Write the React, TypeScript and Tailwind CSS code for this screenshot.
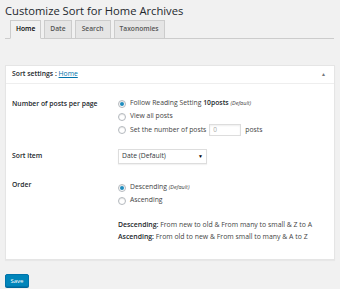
import React from "react";

function Radio({ checked }: { checked?: boolean }) {
  return (
    <span className="inline-flex items-center justify-center w-[8px] h-[8px] rounded-full border border-[#b4b9be] bg-white shadow-[inset_0_1px_1px_rgba(0,0,0,0.1)] shrink-0">
      {checked && <span className="w-[4px] h-[4px] rounded-full bg-[#1e8cbe]" />}
    </span>
  );
}

export default function App() {
  const font = { fontFamily: '"Open Sans", "Noto Sans", sans-serif' };
  return (
    <div className="w-[340px] h-[289px] bg-[#f1f1f1] text-[#444] overflow-hidden" style={font}>
      <div className="px-[5px]">
        <div className="pt-[2px] h-[20px] text-[11.2px] font-normal leading-[18px] text-[#23282d]">Customize Sort for Home Archives</div>
        <div className="flex items-end gap-[3px] pl-[5px] h-[19px] border-b border-[#ccc] mr-[1px]">
          <div className="h-[19px] -mb-px px-[5px] flex items-center border border-[#ccc] border-b-[#f1f1f1] bg-[#f1f1f1] text-[6.7px] font-semibold text-[#000]">Home</div>
          <div className="h-[18px] px-[5px] flex items-center border border-[#ccc] border-b-0 bg-[#e5e5e5] text-[6.7px] font-semibold text-[#555]">Date</div>
          <div className="h-[18px] px-[6px] flex items-center border border-[#ccc] border-b-0 bg-[#e5e5e5] text-[6.7px] font-semibold text-[#555]">Search</div>
          <div className="h-[18px] px-[5px] flex items-center border border-[#ccc] border-b-0 bg-[#e5e5e5] text-[6.7px] font-semibold text-[#555]">Taxonomies</div>
        </div>
        <div className="mt-[26px] bg-white border border-[#e5e5e5] shadow-[0_1px_1px_rgba(0,0,0,0.04)] w-[330px]">
          <div className="h-[18px] px-[6px] flex items-center justify-between border-b border-[#eee] text-[6.8px] font-semibold text-[#23282d]">
            <span>Sort settings : <span className="text-[#0073aa] underline font-normal">Home</span></span>
            <span className="text-[5px] text-[#72777c] mr-[2px]">▲</span>
          </div>
          <div className="pl-[6px] pt-[13px] pb-[16px] text-[6.8px]">
            <div className="flex">
              <div className="w-[106px] font-semibold text-[#23282d] leading-[13px]">Number of posts per page</div>
              <div className="flex flex-col">
                <div className="h-[13px] flex items-center gap-[4px]"><Radio checked /><span>Follow Reading Setting <b className="font-semibold text-[#23282d]">10posts</b> <i className="text-[5.5px]">(Default)</i></span></div>
                <div className="h-[13px] flex items-center gap-[4px]"><Radio /><span>View all posts</span></div>
                <div className="h-[14px] flex items-center gap-[4px]"><Radio /><span>Set the number of posts</span>
                  <span className="-ml-[1px] w-[32px] h-[12px] border border-[#ddd] shadow-[inset_0_1px_2px_rgba(0,0,0,0.07)] text-[#aaa] text-[6.5px] flex items-center pl-[3px]">0</span>
                  <span>posts</span>
                </div>
              </div>
            </div>
            <div className="flex mt-[12px] items-center">
              <div className="w-[106px] font-semibold text-[#23282d]">Sort item</div>
              <div className="w-[89px] h-[15px] border border-[#ddd] shadow-[0_1px_1px_rgba(0,0,0,0.05)] flex items-center justify-between px-[3px] text-[#32373c] text-[6.8px]">
                <span>Date (Default)</span><span className="text-[5px] text-[#000]">▼</span>
              </div>
            </div>
            <div className="flex mt-[17px]">
              <div className="w-[106px] font-semibold text-[#23282d] leading-[13px] -mt-[3px]">Order</div>
              <div className="flex flex-col">
                <div className="h-[13px] flex items-center gap-[4px]"><Radio checked /><span>Descending <i className="text-[5.5px]">(Default)</i></span></div>
                <div className="h-[13px] flex items-center gap-[4px]"><Radio /><span>Ascending</span></div>
              </div>
            </div>
            <div className="ml-[106px] mt-[12px] text-[6.9px] leading-[12px]">
              <div><b className="font-semibold text-[#23282d]">Descending:</b> From new to old &amp; From many to small &amp; Z to A</div>
              <div><b className="font-semibold text-[#23282d]">Ascending:</b> From old to new &amp; From small to many &amp; A to Z</div>
            </div>
          </div>
        </div>
        <div className="mt-[14px]">
          <button className="w-[24px] h-[13px] bg-[#0085ba] border border-[#0073aa] rounded-[2px] text-white text-[6px] leading-none flex items-center justify-center shadow-[0_1px_0_#006799]">Save</button>
        </div>
      </div>
    </div>
  );
}
